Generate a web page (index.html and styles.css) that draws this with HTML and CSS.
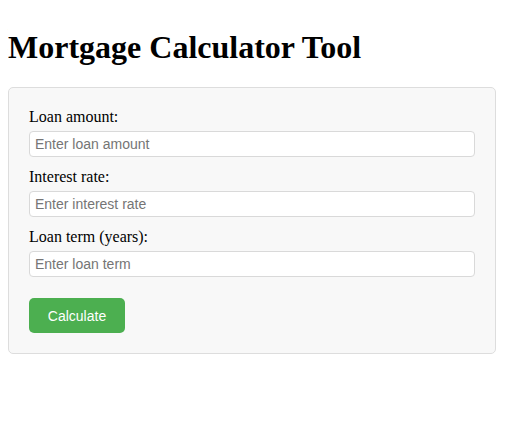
FILE: index.html
```html
<!DOCTYPE html>
<html>
<head>
<meta charset="utf-8">
<title>Mortgage Calculator Tool</title>
<link rel="stylesheet" href="styles.css">
</head>
<body>
<h1 class="title">Mortgage Calculator Tool</h1>
<form class="calc">
  <label class="field-label" for="amount">Loan amount:</label>
  <input class="field" type="text" id="amount" placeholder="Enter loan amount">
  <label class="field-label" for="rate">Interest rate:</label>
  <input class="field" type="text" id="rate" placeholder="Enter interest rate">
  <label class="field-label" for="term">Loan term (years):</label>
  <input class="field" type="text" id="term" placeholder="Enter loan term">
  <button class="btn" type="button">Calculate</button>
</form>
</body>
</html>
```
FILE: styles.css
```css
body {
  margin: 8px;
  font-family: "Liberation Serif", "Times New Roman", serif;
  font-size: 16px;
  color: #000;
  background: #fff;
}
.title {
  font-size: 32px;
  font-weight: bold;
  margin: 21px 0 21px;
  line-height: 37px;
}
.calc {
  box-sizing: border-box;
  width: 488px;
  padding: 20px;
  background: #f8f8f8;
  border: 1px solid #dddddd;
  border-radius: 5px;
  display: flex;
  flex-direction: column;
  align-items: flex-start;
}
.field-label {
  display: block;
  line-height: 18px;
  margin-bottom: 5px;
}
.field {
  box-sizing: border-box;
  width: 100%;
  height: 26px;
  padding: 0 5px;
  margin: 0 0 11px;
  font-family: "Liberation Sans", Arial, sans-serif;
  font-size: 14px;
  border: 1px solid #d9d9d9;
  border-radius: 4px;
  background: #fff;
  outline: none;
}
.field::placeholder {
  color: #757575;
}
.btn {
  margin-top: 10px;
  width: 96px;
  height: 35px;
  padding: 0;
  border: none;
  border-radius: 5px;
  background: #4caf50;
  color: #fff;
  font-family: "Liberation Sans", Arial, sans-serif;
  font-size: 14px;
  cursor: pointer;
}
```
